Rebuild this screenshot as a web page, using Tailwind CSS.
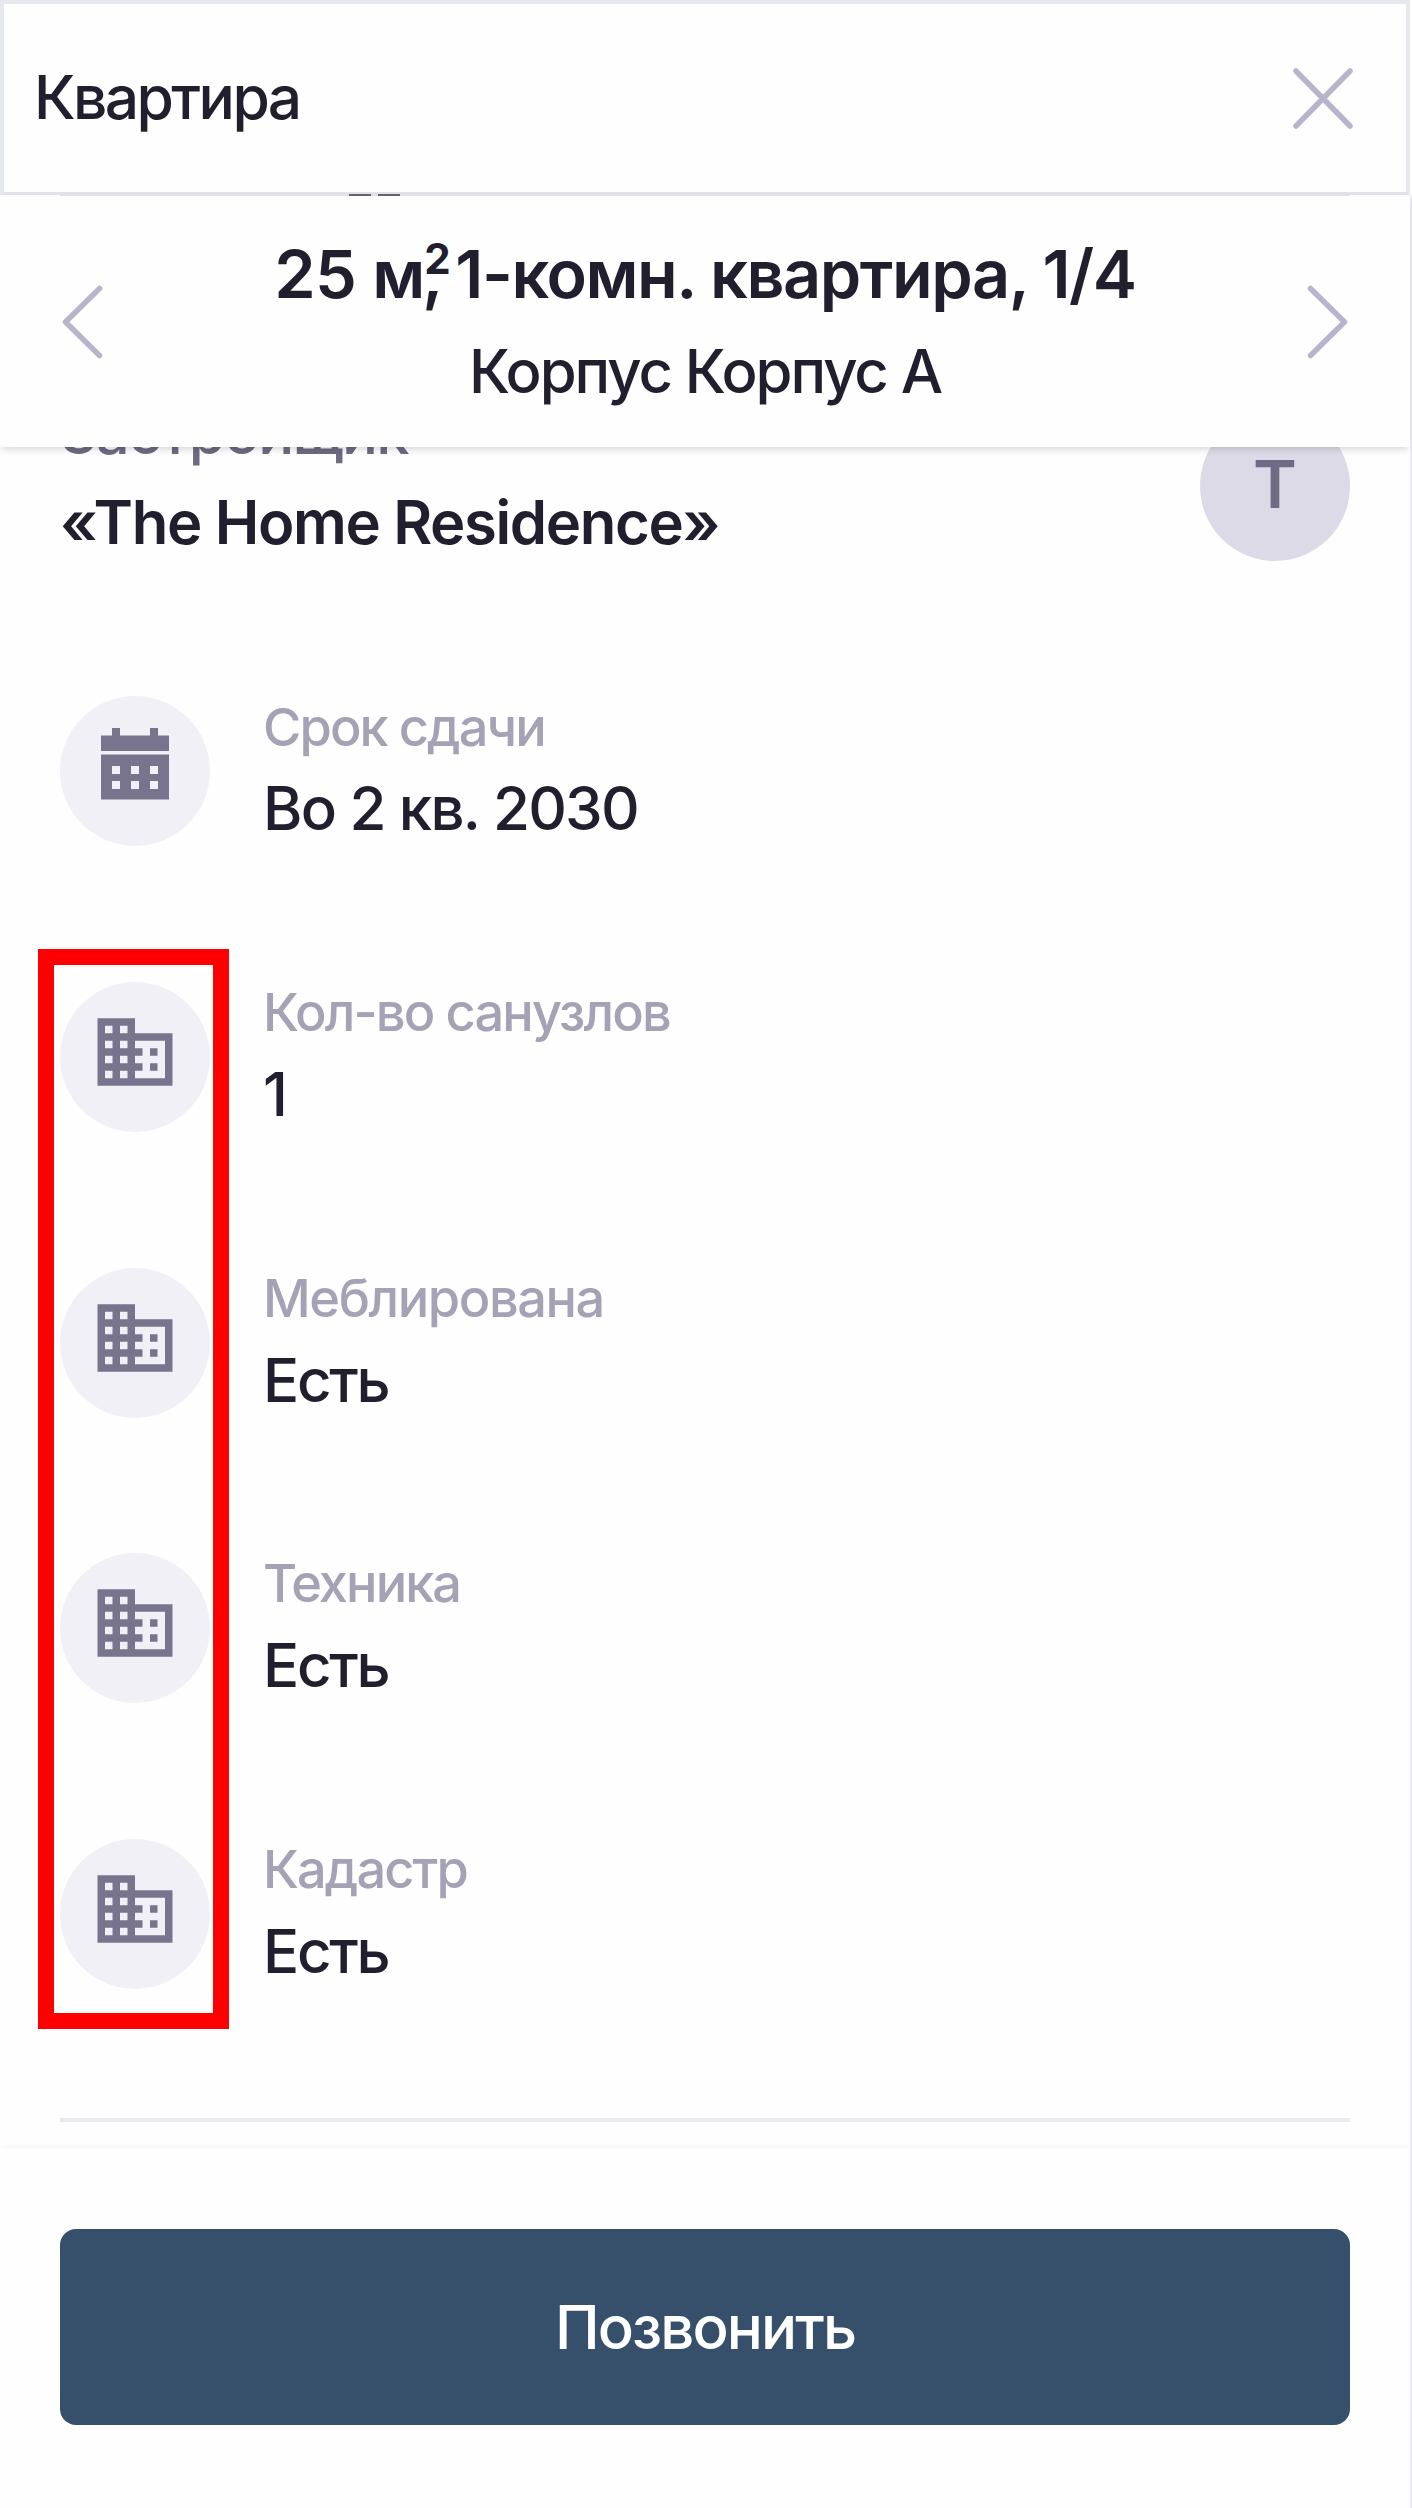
<!DOCTYPE html>
<html lang="ru">
<head>
<meta charset="utf-8">
<title>Квартира</title>
<script src="https://cdn.jsdelivr.net/npm/@tailwindcss/browser@4"></script>
</head>
<body class="bg-[#fefefe]">
<svg class="hidden">
  <symbol id="building" viewBox="0 0 24 24"><path d="M12 7V3H2v18h20V7H12zM6 19H4v-2h2v2zm0-4H4v-2h2v2zm0-4H4V9h2v2zm0-4H4V5h2v2zm4 12H8v-2h2v2zm0-4H8v-2h2v2zm0-4H8V9h2v2zm0-4H8V5h2v2zm10 12h-8v-2h2v-2h-2v-2h2v-2h-2V9h8v10zm-2-8h-2v2h2v-2zm0 4h-2v2h2v-2z"/></symbol>
</svg>
<div class="relative flex h-[2508px] w-[1412px] flex-col overflow-hidden font-[Inter,sans-serif] text-[60px] text-[#211f2d]">

  <!-- Modal header -->
  <header class="flex h-[195px] w-[1410px] shrink-0 items-center justify-between border-4 border-b-[3px] border-[#e5e8ec] border-b-[#e2e2ea] bg-[#fefefe] pr-[51px] pl-[30px]">
    <h1 class="-mt-[2px] text-[60.5px] leading-[72px] font-medium tracking-[-2.6px]">Квартира</h1>
    <svg class="h-[64px] w-[64px]" viewBox="0 0 64 64" fill="none" stroke="#b8b4cb" stroke-width="5.5" stroke-linecap="round"><path d="M5 5L59 60M59 5L5 60"/></svg>
  </header>

  <div class="relative flex grow flex-col border-r-2 border-[#eeedf6]">
    <!-- Edge of the content scrolled under the header -->
    <div class="absolute -top-[2px] left-[60px] h-[3px] w-[1290px] bg-[#e1e1ea]"></div>
    <div class="absolute -top-[1px] left-[349px] flex gap-[7px]">
      <i class="h-[2px] w-[22px] bg-[#66636f]"></i><i class="h-[2px] w-[22px] bg-[#66636f]"></i>
    </div>

    <!-- Flat switcher -->
    <nav class="relative z-10 mt-px flex h-[251px] w-[1410px] shrink-0 items-center justify-between bg-[#fefefe] pr-[61px] pl-[61px] shadow-[0_4px_7px_-2px_rgba(0,0,0,0.17)]">
      <svg class="h-[74px] w-[42px]" viewBox="0 0 42 74" fill="none" stroke="#b8b4cb" stroke-width="5.5" stroke-linecap="round" stroke-linejoin="round"><path d="M38.500 3.500L4.500 37L38.500 70.500"/></svg>
      <div class="-mt-[2px] flex flex-col items-center">
        <div class="flex h-[80px] text-[66.5px] leading-[80px] font-semibold whitespace-pre">
          <span class="w-[148px] tracking-[-0.7px]">25 м</span>
          <span class="relative w-[33px]">,<b class="absolute top-[5px] left-[2px] text-[42px] leading-[40px] font-bold">2</b></span>
          <span class="tracking-[-1.45px]">1-комн. квартира, 1/4</span>
        </div>
        <div class="mt-[21px] text-[59.800px] leading-[72px] font-medium tracking-[-2.05px]">Корпус Корпус А</div>
      </div>
      <svg class="h-[74px] w-[42px]" viewBox="0 0 42 74" fill="none" stroke="#b8b4cb" stroke-width="5.5" stroke-linecap="round" stroke-linejoin="round"><path d="M3.500 3.500L37.500 37L3.500 70.500"/></svg>
    </nav>

    <main class="flex flex-col pr-[60px] pl-[60px]">
      <!-- Developer -->
      <section class="-mt-[51px] flex justify-between">
        <div>
          <div class="text-[59.800px] leading-[72px] font-medium tracking-[-1.7px] text-[#6e6a82]">Застройщик</div>
          <div class="mt-[18px] text-[59.800px] leading-[72px] font-semibold tracking-[-1.35px]">«The Home Residence»</div>
        </div>
        <div class="mt-[15px] flex size-[150px] items-center justify-center rounded-full bg-[#dddae7] text-[66.500px] leading-[80px] font-semibold text-[#706b85]"><span class="-mt-[4px]">T</span></div>
      </section>

      <!-- Attributes -->
      <ul class="mt-[135px] flex flex-col gap-[135.800px]">
        <li class="flex h-[150px] gap-[53px]">
          <div class="flex size-[150px] justify-center rounded-full bg-[#f2f0f7] pt-[32px]">
            <svg class="h-[72px] w-[68px] fill-[#78748d]" viewBox="0 0 68 72"><path fill-rule="evenodd" d="M0 7.500H11V0H19V7.500H49V0H57V7.500H68V23H0ZM0 26.500H68V71.500H0ZM11 38V46H19V38ZM30 38V46H38V38ZM49 38V46H57V38ZM11 53V61H19V53ZM30 53V61H38V53ZM49 53V61H57V53Z"/></svg>
          </div>
          <div>
            <div class="text-[52.300px] leading-[63px] font-medium tracking-[-1.9px] text-[#a6a2b6]">Срок сдачи</div>
            <div class="leading-[98px] font-medium tracking-[-1.75px]">Во 2 кв. 2030</div>
          </div>
        </li>
        <li class="flex h-[150px] gap-[53px]">
          <div class="flex size-[150px] justify-center rounded-full bg-[#f2f0f7] pt-[25px]"><svg class="size-[90px] fill-[#78748d]"><use href="#building"/></svg></div>
          <div>
            <div class="text-[52.300px] leading-[60px] font-medium tracking-[-1.85px] text-[#a6a2b6]">Кол-во санузлов</div>
            <div class="leading-[104px] font-medium">1</div>
          </div>
        </li>
        <li class="flex h-[150px] gap-[53px]">
          <div class="flex size-[150px] justify-center rounded-full bg-[#f2f0f7] pt-[25px]"><svg class="size-[90px] fill-[#78748d]"><use href="#building"/></svg></div>
          <div>
            <div class="text-[52.300px] leading-[60px] font-medium tracking-[-1.4px] text-[#a6a2b6]">Меблирована</div>
            <div class="leading-[104px] font-medium tracking-[-2.3px]">Есть</div>
          </div>
        </li>
        <li class="flex h-[150px] gap-[53px]">
          <div class="flex size-[150px] justify-center rounded-full bg-[#f2f0f7] pt-[25px]"><svg class="size-[90px] fill-[#78748d]"><use href="#building"/></svg></div>
          <div>
            <div class="text-[52.300px] leading-[60px] font-medium tracking-[-1.9px] text-[#a6a2b6]">Техника</div>
            <div class="leading-[105px] font-medium tracking-[-2.3px]">Есть</div>
          </div>
        </li>
        <li class="flex h-[150px] gap-[53px]">
          <div class="flex size-[150px] justify-center rounded-full bg-[#f2f0f7] pt-[25px]"><svg class="size-[90px] fill-[#78748d]"><use href="#building"/></svg></div>
          <div>
            <div class="text-[52.300px] leading-[60px] font-medium tracking-[-1.9px] text-[#a6a2b6]">Кадастр</div>
            <div class="leading-[104px] font-medium tracking-[-2.3px]">Есть</div>
          </div>
        </li>
      </ul>
      <hr class="mt-[129px] h-[4px] w-[1290px] border-0 bg-[#e8eaee]">
    </main>

    <!-- Call to action -->
    <footer class="mt-auto h-[360px] px-[60px] pt-[81px] shadow-[0_-3px_4px_-1px_rgba(0,0,0,0.03)]">
      <button class="block h-[196px] w-[1290px] rounded-[16px] bg-[#364f6b] text-center text-[60px] leading-[196px] font-medium tracking-[-1.9px] text-white">Позвонить</button>
    </footer>
  </div>

  <!-- Highlight frame around the repeated icons -->
  <div class="absolute top-[949px] left-[38px] h-[1080px] w-[191px] border-[16px] border-[#ff0000]"></div>
</div>
</body>
</html>
